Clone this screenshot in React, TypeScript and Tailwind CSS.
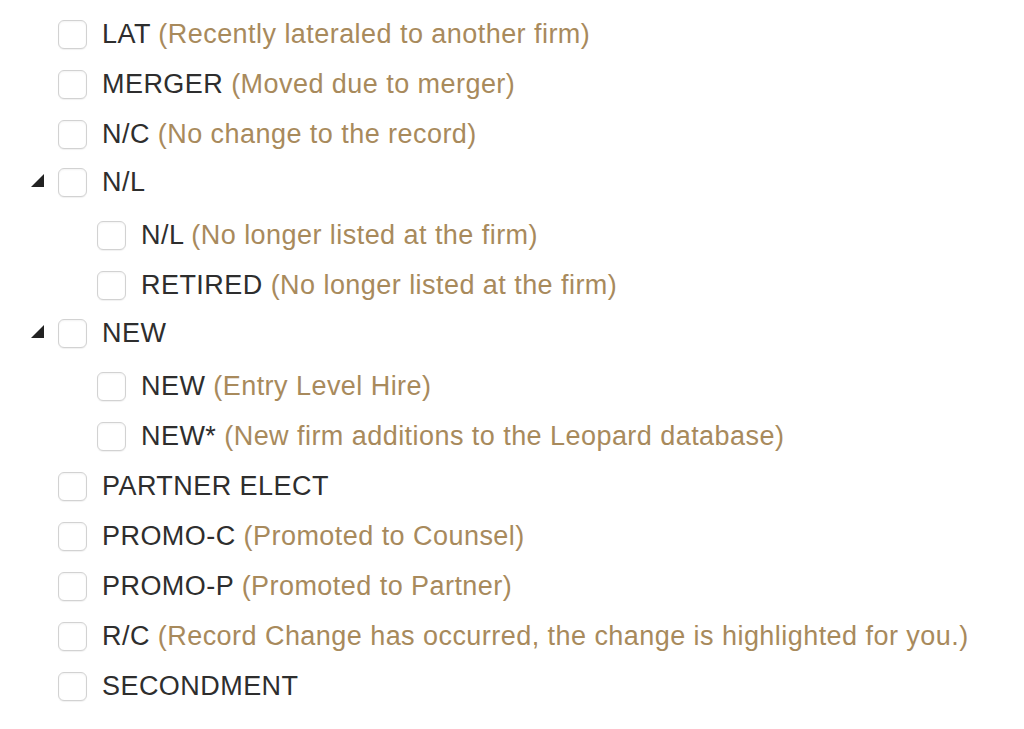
import React from 'react'

interface Item {
  code: string
  note?: string
  children?: Item[]
}

const items: Item[] = [
  { code: 'LAT', note: '(Recently lateraled to another firm)' },
  { code: 'MERGER', note: '(Moved due to merger)' },
  { code: 'N/C', note: '(No change to the record)' },
  {
    code: 'N/L',
    children: [
      { code: 'N/L', note: '(No longer listed at the firm)' },
      { code: 'RETIRED', note: '(No longer listed at the firm)' },
    ],
  },
  {
    code: 'NEW',
    children: [
      { code: 'NEW', note: '(Entry Level Hire)' },
      { code: 'NEW*', note: '(New firm additions to the Leopard database)' },
    ],
  },
  { code: 'PARTNER ELECT' },
  { code: 'PROMO-C', note: '(Promoted to Counsel)' },
  { code: 'PROMO-P', note: '(Promoted to Partner)' },
  { code: 'R/C', note: '(Record Change has occurred, the change is highlighted for you.)' },
  { code: 'SECONDMENT' },
]

function Box() {
  return (
    <span className="w-[29px] h-[29px] shrink-0 rounded-[6px] border border-[#d2d2d2] bg-white shadow-[0_1px_1px_rgba(0,0,0,0.06),inset_0_1px_2px_rgba(0,0,0,0.05)]" />
  )
}

function Label({ item }: { item: Item }) {
  return (
    <span className="ml-[15px] whitespace-nowrap text-[27px] tracking-[0.45px] leading-none text-[#2e2e2e]">
      {item.code}
      {item.note && <span className="text-[#a88a5c]"> {item.note}</span>}
    </span>
  )
}

function Row({ item, indent = false }: { item: Item; indent?: boolean }) {
  return (
    <div className={`flex items-center h-[50px] ${indent ? 'pl-[97px]' : 'pl-[58px]'}`}>
      <Box />
      <Label item={item} />
    </div>
  )
}

function Group({ item }: { item: Item }) {
  return (
    <div>
      <div className="flex items-center h-[46px]">
        <div className="w-[58px] flex justify-end pr-[14px]">
          <svg width="13" height="13" viewBox="0 0 13 13" className="-mt-[3px]">
            <polygon points="13,0 13,13 0,13" fill="#222" />
          </svg>
        </div>
        <Box />
        <Label item={item} />
      </div>
      <div className="mt-[5px]">
        {item.children!.map((c, i) => (
          <Row key={i} item={c} indent />
        ))}
      </div>
    </div>
  )
}

export default function App() {
  return (
    <div className="w-[1024px] h-[729px] bg-white pt-[9px] font-['Liberation_Sans',Arial,sans-serif] overflow-hidden">
      {items.map((item, i) =>
        item.children ? <Group key={i} item={item} /> : <Row key={i} item={item} />
      )}
    </div>
  )
}
